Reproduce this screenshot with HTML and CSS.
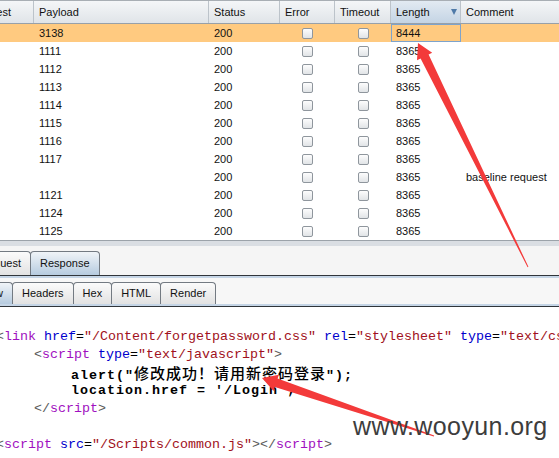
FILE: index.html
```html
<!DOCTYPE html>
<html>
<head>
<meta charset="utf-8">
<link rel="stylesheet" href="styles.css">
</head>
<body>
<div class="app">
  <div class="grid head">
    <div class="hc">Request</div>
    <div class="hc">Payload</div>
    <div class="hc">Status</div>
    <div class="hc">Error</div>
    <div class="hc">Timeout</div>
    <div class="hc sorted">Length<span class="sort"></span></div>
    <div class="hc">Comment</div>
  </div>
  <div class="rows">
    <div class="grid row sel"><div class="c"></div><div class="c">3138</div><div class="c">200</div><div class="c cb"><span class="box"></span></div><div class="c cb"><span class="box"></span></div><div class="c focus">8444</div><div class="c"></div></div>
    <div class="grid row"><div class="c"></div><div class="c">1111</div><div class="c">200</div><div class="c cb"><span class="box"></span></div><div class="c cb"><span class="box"></span></div><div class="c">8365</div><div class="c"></div></div>
    <div class="grid row"><div class="c"></div><div class="c">1112</div><div class="c">200</div><div class="c cb"><span class="box"></span></div><div class="c cb"><span class="box"></span></div><div class="c">8365</div><div class="c"></div></div>
    <div class="grid row"><div class="c"></div><div class="c">1113</div><div class="c">200</div><div class="c cb"><span class="box"></span></div><div class="c cb"><span class="box"></span></div><div class="c">8365</div><div class="c"></div></div>
    <div class="grid row"><div class="c"></div><div class="c">1114</div><div class="c">200</div><div class="c cb"><span class="box"></span></div><div class="c cb"><span class="box"></span></div><div class="c">8365</div><div class="c"></div></div>
    <div class="grid row"><div class="c"></div><div class="c">1115</div><div class="c">200</div><div class="c cb"><span class="box"></span></div><div class="c cb"><span class="box"></span></div><div class="c">8365</div><div class="c"></div></div>
    <div class="grid row"><div class="c"></div><div class="c">1116</div><div class="c">200</div><div class="c cb"><span class="box"></span></div><div class="c cb"><span class="box"></span></div><div class="c">8365</div><div class="c"></div></div>
    <div class="grid row"><div class="c"></div><div class="c">1117</div><div class="c">200</div><div class="c cb"><span class="box"></span></div><div class="c cb"><span class="box"></span></div><div class="c">8365</div><div class="c"></div></div>
    <div class="grid row"><div class="c"></div><div class="c"></div><div class="c">200</div><div class="c cb"><span class="box"></span></div><div class="c cb"><span class="box"></span></div><div class="c">8365</div><div class="c">baseline request</div></div>
    <div class="grid row"><div class="c"></div><div class="c">1121</div><div class="c">200</div><div class="c cb"><span class="box"></span></div><div class="c cb"><span class="box"></span></div><div class="c">8365</div><div class="c"></div></div>
    <div class="grid row"><div class="c"></div><div class="c">1124</div><div class="c">200</div><div class="c cb"><span class="box"></span></div><div class="c cb"><span class="box"></span></div><div class="c">8365</div><div class="c"></div></div>
    <div class="grid row"><div class="c"></div><div class="c">1125</div><div class="c">200</div><div class="c cb"><span class="box"></span></div><div class="c cb"><span class="box"></span></div><div class="c">8365</div><div class="c"></div></div>
  </div>
  <div class="split"></div>
  <div class="tabs tabs1">
    <div class="tab">Request</div>
    <div class="tab on">Response</div>
  </div>
  <div class="rule1"></div>
  <div class="tabs tabs2">
    <div class="tab on">Raw</div>
    <div class="tab">Headers</div>
    <div class="tab">Hex</div>
    <div class="tab">HTML</div>
    <div class="tab">Render</div>
  </div>
  <div class="rule2"></div>
  <div class="code">
    <div class="ln i0"><span class="p">&lt;</span><span class="t">link</span> <span class="a">href</span>=<span class="s">"/Content/forgetpassword.css"</span> <span class="a">rel</span>=<span class="s">"stylesheet"</span> <span class="a">type</span>=<span class="s">"text/css"</span><span class="p">&gt;</span></div>
    <div class="ln i1"><span class="p">&lt;</span><span class="t">script</span> <span class="a">type</span>=<span class="s">"text/javascript"</span><span class="p">&gt;</span></div>
    <div class="ln i2"><span class="js">alert("<span class="zh">修改成功！请用新密码登录</span>");</span></div>
    <div class="ln i2"><span class="js">location.href = '/Login';</span></div>
    <div class="ln i1"><span class="p">&lt;/</span><span class="t">script</span><span class="p">&gt;</span></div>
    <div class="ln i0"></div>
    <div class="ln i0"><span class="p">&lt;</span><span class="t">script</span> <span class="a">src</span>=<span class="s">"/Scripts/common.js"</span><span class="p">&gt;&lt;/</span><span class="t">script</span><span class="p">&gt;</span></div>
  </div>
</div>
<svg class="arrows" width="559" height="458" viewBox="0 0 559 458">
  <polygon points="418,43 432.2,52.8 428.6,54.5 528.4,266.8 527.6,267.2 420.6,58.5 417,60.2" fill="#f33a3a"/>
  <polygon points="262,378 278.9,374.7 277.6,378.5 434.2,435.5 433.8,436.5 274.8,387.1 273.5,390.9" fill="#f33a3a"/>
</svg>
<div class="wm">www.wooyun.org</div>
</body>
</html>
```
FILE: styles.css
```css
html, body {
  margin: 0;
  padding: 0;
  overflow: hidden;
}
body {
  width: 559px;
  height: 458px;
  position: relative;
  background: #ffffff;
  font-family: "Liberation Sans", Arial, sans-serif;
  color: #111;
}
.app {
  margin-left: -35px;
  width: 700px;
}
.grid {
  display: grid;
  grid-template-columns: 69px 175px 71px 55px 56px 70px 1fr;
}
.head {
  height: 22px;
  border-top: 1px solid #a8aeb4;
  border-bottom: 1px solid #98a0a8;
  background: linear-gradient(#f4f6f8, #e0e4e8);
}
.hc {
  box-sizing: border-box;
  border-right: 1px solid #bcc3ca;
  padding-left: 5px;
  font-size: 11px;
  line-height: 22px;
  display: flex;
  align-items: center;
  white-space: nowrap;
  overflow: hidden;
}
.hc.sorted {
  background: linear-gradient(#e2eaf2, #c4d4e4);
}
.sort {
  margin-left: auto;
  margin-right: 3px;
  width: 0;
  height: 0;
  border-left: 3px solid transparent;
  border-right: 3px solid transparent;
  border-top: 6px solid #4f7aa8;
}
.row {
  height: 18px;
  font-size: 11px;
  line-height: 18px;
}
.c {
  box-sizing: border-box;
  padding-left: 5px;
  white-space: nowrap;
  overflow: hidden;
}
.sel {
  background: #ffca80;
}
.focus {
  border: 1px solid #7da3cc;
  padding-left: 4px;
  line-height: 16px;
}
.cb {
  display: flex;
  justify-content: center;
  align-items: center;
  padding: 0;
}
.box {
  box-sizing: border-box;
  width: 11px;
  height: 11px;
  border: 1px solid #8f969d;
  border-radius: 2px;
  background: linear-gradient(#fdfdfd, #e1e4e7);
}
.split {
  border-top: 1px solid #9ca3aa;
  height: 5px;
  background: #dadee3;
}
.tabs {
  display: flex;
  align-items: flex-end;
}
.tabs1 {
  height: 29px;
  background: #f5f5f5;
  padding-left: 5px;
}
.tabs2 {
  height: 26px;
  background: #f7f7f7;
  padding-left: 6px;
}
.tab {
  box-sizing: border-box;
  border: 1px solid #737a82;
  border-bottom: none;
  border-radius: 4px 4px 0 0;
  padding: 0 9px;
  margin-right: -1px;
  font-size: 11px;
  background: linear-gradient(#fbfbfb, #e2e2e2);
  white-space: nowrap;
}
.tabs1 .tab {
  height: 24px;
  line-height: 23px;
}
.tabs2 .tab {
  height: 22px;
  line-height: 21px;
}
.tab.on {
  background: linear-gradient(#f0f4f8, #b6cbdf);
  position: relative;
  z-index: 1;
}
.rule1 {
  border-top: 1px solid #30353a;
  height: 2px;
  background: #c5d5e6;
}
.rule2 {
  height: 2px;
  background: #c5d5e6;
  border-bottom: 1px solid #30353a;
}
.code {
  padding-top: 21px;
  font-family: "Liberation Mono", "Courier New", monospace;
  font-size: 13.333px;
  color: #000;
}
.ln {
  height: 18px;
  line-height: 18px;
  white-space: pre;
}
.i0 { padding-left: 31px; }
.i1 { padding-left: 69px; }
.i2 { padding-left: 106px; }
.p { color: #5a5a5a; }
.t { color: #a010c0; }
.a { color: #0000cc; }
.s { color: #a01020; }
.js {
  font-weight: bold;
  letter-spacing: 1px;
  color: #000;
}
.zh {
  font-family: "Noto Sans CJK SC", sans-serif;
  font-size: 15px;
  font-weight: 500;
  letter-spacing: 1px;
}
.arrows {
  position: absolute;
  left: 0;
  top: 0;
  pointer-events: none;
}
.wm {
  position: absolute;
  left: 353px;
  top: 414px;
  font-family: "Liberation Sans", Arial, sans-serif;
  font-size: 25px;
  line-height: 25px;
  letter-spacing: 0.4px;
  color: #3d3d3d;
  white-space: nowrap;
}
```
